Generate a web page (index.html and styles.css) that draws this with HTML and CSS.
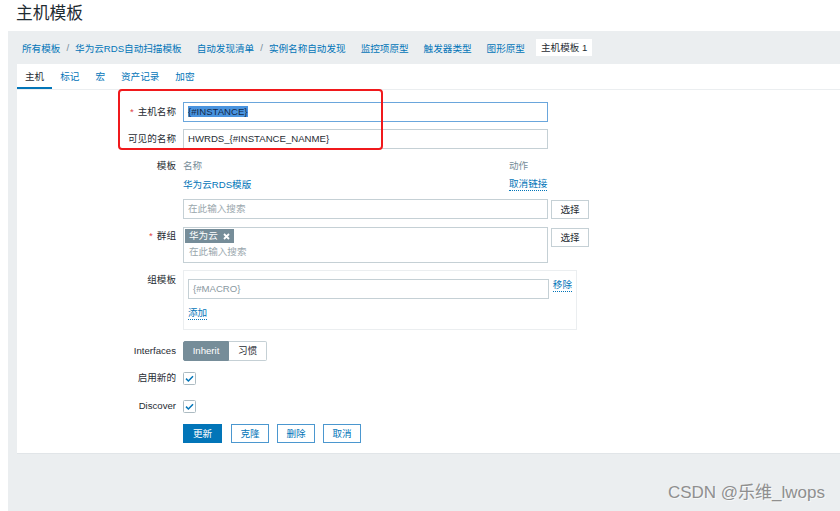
FILE: index.html
```html
<!DOCTYPE html>
<html lang="zh">
<head>
<meta charset="utf-8">
<title>主机模板</title>
<link rel="stylesheet" href="styles.css">
</head>
<body>
<header class="header"><h1 class="title">主机模板</h1></header>
<div class="page">
  <nav class="crumbs">
    <div class="crumb-group"><a>所有模板</a><span class="sep">/</span><a>华为云RDS自动扫描模板</a></div>
    <div class="crumb-group"><a>自动发现清单</a><span class="sep">/</span><a>实例名称自动发现</a></div>
    <div class="crumb-group"><a>监控项原型</a></div>
    <div class="crumb-group"><a>触发器类型</a></div>
    <div class="crumb-group"><a>图形原型</a></div>
    <div class="crumb-current">主机模板 1</div>
  </nav>
  <section class="panel">
    <div class="tabs">
      <span class="tab active">主机</span>
      <span class="tab">标记</span>
      <span class="tab">宏</span>
      <span class="tab">资产记录</span>
      <span class="tab">加密</span>
    </div>
    <div class="annot"></div>
    <div class="form">
      <div class="row r1">
        <div class="label"><span class="req">*</span>主机名称</div>
        <div class="input focus"><span class="sel">{#INSTANCE}</span></div>
      </div>
      <div class="row r2">
        <div class="label">可见的名称</div>
        <div class="input">HWRDS_{#INSTANCE_NANME}</div>
      </div>
      <div class="row r3">
        <div class="label lh14">模板</div>
        <div class="col">
          <div class="tpl">
            <span class="th">名称</span><span class="th">动作</span>
            <a class="link">华为云RDS模版</a><a class="link dotted">取消链接</a>
          </div>
          <div class="with-btn">
            <div class="input ph">在此输入搜索</div>
            <span class="btn-sel">选择</span>
          </div>
        </div>
      </div>
      <div class="row r4">
        <div class="label lh18"><span class="req">*</span>群组</div>
        <div class="with-btn top">
          <div class="multi">
            <span class="tag">华为云<svg class="tag-x" width="7" height="7" viewBox="0 0 7 7"><path d="M1 1L6 6M6 1L1 6" stroke="#fff" stroke-width="1.8"/></svg></span>
            <div class="multi-ph">在此输入搜索</div>
          </div>
          <span class="btn-sel">选择</span>
        </div>
      </div>
      <div class="row r5">
        <div class="label">组模板</div>
        <div class="grp">
          <div class="grp-line">
            <div class="input macro">{#MACRO}</div>
            <a class="link dotted">移除</a>
          </div>
          <a class="link dotted add">添加</a>
        </div>
      </div>
      <div class="row r6">
        <div class="label">Interfaces</div>
        <div class="seg"><span class="seg-on">Inherit</span><span class="seg-off">习惯</span></div>
      </div>
      <div class="row r7">
        <div class="label">启用新的</div>
        <div class="cbwrap"><svg class="cb" width="13" height="13" viewBox="0 0 13 13"><rect x="0.5" y="0.5" width="12" height="12" rx="1" fill="#fff" stroke="#acbbc2"/><path d="M3 6.6L5.4 9L10 4.2" fill="none" stroke="#0275b8" stroke-width="1.5"/></svg></div>
      </div>
      <div class="row r8">
        <div class="label">Discover</div>
        <div class="cbwrap"><svg class="cb" width="13" height="13" viewBox="0 0 13 13"><rect x="0.5" y="0.5" width="12" height="12" rx="1" fill="#fff" stroke="#acbbc2"/><path d="M3 6.6L5.4 9L10 4.2" fill="none" stroke="#0275b8" stroke-width="1.5"/></svg></div>
      </div>
      <div class="row r9">
        <div class="label"></div>
        <div class="btns">
          <span class="btn primary">更新</span>
          <span class="btn">克隆</span>
          <span class="btn">删除</span>
          <span class="btn">取消</span>
        </div>
      </div>
    </div>
  </section>
  <div class="watermark">CSDN @乐维_lwops</div>
</div>
</body>
</html>
```
FILE: styles.css
```css
* { box-sizing: border-box; }
html, body { width: 840px; height: 511px; overflow: hidden; }
body {
  margin: 0;
  background: #fff;
  font-family: "Liberation Sans", "Noto Sans CJK SC", sans-serif;
  font-size: 9.6px;
  color: #1f2c33;
}
a { text-decoration: none; }

.header { height: 31px; padding: 4px 0 0 16px; }
.title { margin: 0; font-size: 16.8px; font-weight: normal; line-height: 20px; color: #1f2c33; }

.page { margin-left: 8px; background: #ebeef0; height: 480px; position: relative; }

.crumbs { height: 33px; display: flex; align-items: center; padding-left: 14px; white-space: nowrap; }
.crumb-group { display: flex; align-items: center; margin-right: 15px; }
.crumb-group a { color: #0275b8; }
.sep { color: #768d99; margin: 0 6px; }
.crumb-current { background: #fff; padding: 0 5px; height: 17px; line-height: 17px; margin-left: -4px; }

.panel { margin-left: 9px; background: #fff; height: 390px; position: relative; border-bottom: 1px solid #e1e5e8; }

.tabs { display: flex; height: 26px; border-bottom: 1px solid #ebeef0; }
.tab { padding: 0 8px; line-height: 25px; height: 25px; color: #0275b8; }
.tab.active { color: #1f2c33; box-shadow: inset 0 -2px 0 #0275b8; }

.annot {
  position: absolute; left: 101px; top: 25px; width: 265px; height: 61px;
  border: 2px solid #f0191c; border-radius: 4px;
}

.form { padding-top: 12px; }
.row { display: flex; }
.label { width: 159px; margin-right: 7px; text-align: right; line-height: 20px; flex: none; white-space: nowrap; }
.lh14 { line-height: 14px; }
.lh18 { line-height: 18px; }
.req { color: #e04040; margin-right: 4px; }

.r2 { margin-top: 7px; }
.r3 { margin-top: 10px; }
.r4 { margin-top: 8px; }
.r5 { margin-top: 7px; }
.r6 { margin-top: 11px; }
.r7 { margin-top: 7px; }
.r8 { margin-top: 8px; }
.r9 { margin-top: 8px; }

.input {
  width: 365px; height: 20px; border: 1px solid #c5d0d5; padding: 0 4px;
  line-height: 18px; background: #fff; white-space: nowrap; overflow: hidden;
}
.input.focus { border-color: #6aa6dc; }
.sel { background: #4a94df; color: #13294a; }
.ph { color: #9aa7ad; }

.col { display: flex; flex-direction: column; }
.tpl { width: 365px; display: grid; grid-template-columns: 1fr 39px; grid-template-rows: 14px 14px; row-gap: 5px; line-height: 14px; margin-bottom: 7px; }
.th { color: #768d99; }
.link { color: #0275b8; white-space: nowrap; }
.dotted { border-bottom: 1px dotted #0275b8; align-self: start; justify-self: start; line-height: 12px; }

.with-btn { display: flex; align-items: center; }
.with-btn.top { align-items: flex-start; }
.btn-sel {
  margin-left: 3px; width: 38px; height: 19px; border: 1px solid #c5d0d5; background: #fff;
  text-align: center; line-height: 17px; color: #1f2c33;
}
.with-btn.top .btn-sel { margin-top: 1px; }

.multi { width: 365px; height: 36px; border: 1px solid #c5d0d5; padding: 1px 1px; }
.tag {
  display: inline-flex; align-items: center; height: 14px; padding: 0 4px; background: #768d99;
  color: #fff; line-height: 14px;
}
.tag-x { margin-left: 5px; }
.multi-ph { color: #9aa7ad; line-height: 15px; padding-left: 4px; margin-top: 1px; }

.grp { width: 394px; height: 60px; border: 1px solid #ebeef0; padding: 8px 4px 0 4px; }
.grp-line { display: flex; align-items: center; }
.input.macro { width: 361px; color: #8a999f; }
.grp-line .link { margin-left: 4px; }
.add { display: inline-block; margin-top: 8px; }

.seg { display: flex; height: 20px; line-height: 18px; }
.seg-on { width: 46px; background: #768d99; color: #fff; text-align: center; border: 1px solid #768d99; border-radius: 2px 0 0 2px; }
.seg-off { width: 38px; border: 1px solid #c5d0d5; border-left: none; text-align: center; border-radius: 0 2px 2px 0; }

.cbwrap { height: 20px; display: flex; align-items: center; }
.cb { display: block; }

.btns { display: flex; gap: 8px; }
.btn {
  width: 38px; height: 19px; border: 1px solid #4b97cf; color: #0275b8; background: #fff;
  text-align: center; line-height: 17px;
}
.btn.primary { width: 39px; background: #0275b8; border-color: #0275b8; color: #fff; margin-right: 1px; }

.watermark {
  position: absolute; right: 15px; bottom: 8px; font-size: 17px; line-height: 20px;
  color: #8f8f8f; text-shadow: 1px 1px 0 rgba(255,255,255,0.6);
  font-family: "Liberation Sans", "Noto Sans CJK SC", sans-serif;
}
```
